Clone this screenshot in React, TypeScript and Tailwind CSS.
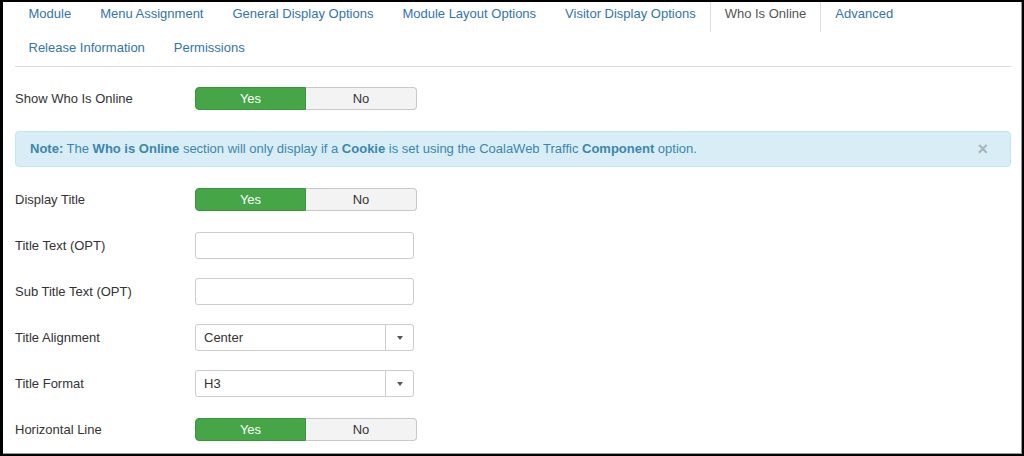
import React from 'react';

const tabs = [
  'Module',
  'Menu Assignment',
  'General Display Options',
  'Module Layout Options',
  'Visitor Display Options',
  'Who Is Online',
  'Advanced',
  'Release Information',
  'Permissions',
];

const Toggle: React.FC = () => (
  <div className="flex h-[23px] w-[222px] text-[13px]">
    <div className="flex w-[111px] items-center justify-center rounded-l-[4px] border border-[#3d933d] bg-[#46a546] text-white">
      Yes
    </div>
    <div className="flex w-[111px] items-center justify-center rounded-r-[4px] border border-l-0 border-[#c8c8c8] bg-[#f3f3f3] text-[#333]">
      No
    </div>
  </div>
);

const TextInput: React.FC = () => (
  <div className="h-[27px] w-[219px] rounded-[3px] border border-[#cccccc] bg-white" />
);

const Select: React.FC<{ value: string }> = ({ value }) => (
  <div className="flex h-[27px] w-[219px] items-stretch rounded-[3px] border border-[#cccccc] bg-white text-[13px] text-[#333]">
    <div className="flex flex-1 items-center pl-[8px]">{value}</div>
    <div className="flex w-[28px] items-center justify-center border-l border-[#cccccc]">
      <div className="h-0 w-0 border-x-[3.5px] border-t-[4px] border-x-transparent border-t-[#555]" />
    </div>
  </div>
);

const Row: React.FC<{ label: string; children: React.ReactNode }> = ({ label, children }) => (
  <div className="flex h-[27px] items-center">
    <div className="w-[180px] text-[13px] text-[#333]">{label}</div>
    {children}
  </div>
);

export default function App() {
  return (
    <div className="h-[456px] w-[1024px] border-b-[2px] border-l-[3px] border-r-[2px] border-t-[2px] border-black bg-black" style={{ fontFamily: '"Liberation Sans", Arial, sans-serif' }}>
      <div className="h-full w-full border-b border-r border-[#9a9a9a] bg-white pl-[12px] pr-[10px]">
        <div className="flex flex-wrap gap-y-[4px] border-b border-[#d6dee4] text-[13px]">
          {tabs.map((t, i) => {
            const active = t === 'Who Is Online';
            return (
              <div
                key={t}
                className={
                  (i === 0 || i === 7 ? '-ml-[1px] ' : '') +
                  (active
                    ? 'h-[30px] border-x border-[#dddddd] px-[13.5px] pt-[2px] leading-[20px] text-[#555]'
                    : 'h-[30px] border-x border-transparent px-[13.5px] pt-[2px] leading-[20px] text-[#3274ab]')
                }
              >
                {t}
              </div>
            );
          })}
        </div>

        <div className="mt-[18px] flex flex-col gap-[19px]">
          <Row label="Show Who Is Online">
            <Toggle />
          </Row>

          <div className="flex h-[36px] items-center rounded-[4px] border border-[#bce8f1] bg-[#d9edf7] pl-[14px] pr-[22px] text-[13px] text-[#3a87ad]">
            <div className="flex-1">
              <b>Note:</b> The <b>Who is Online</b> section will only display if a <b>Cookie</b> is set using the
              CoalaWeb Traffic <b>Component</b> option.
            </div>
            <div className="text-[18px] font-bold leading-none text-[#a7b4bb]">×</div>
          </div>

          <Row label="Display Title">
            <Toggle />
          </Row>
          <Row label="Title Text (OPT)">
            <TextInput />
          </Row>
          <Row label="Sub Title Text (OPT)">
            <TextInput />
          </Row>
          <Row label="Title Alignment">
            <Select value="Center" />
          </Row>
          <Row label="Title Format">
            <Select value="H3" />
          </Row>
          <Row label="Horizontal Line">
            <Toggle />
          </Row>
        </div>
      </div>
    </div>
  );
}
